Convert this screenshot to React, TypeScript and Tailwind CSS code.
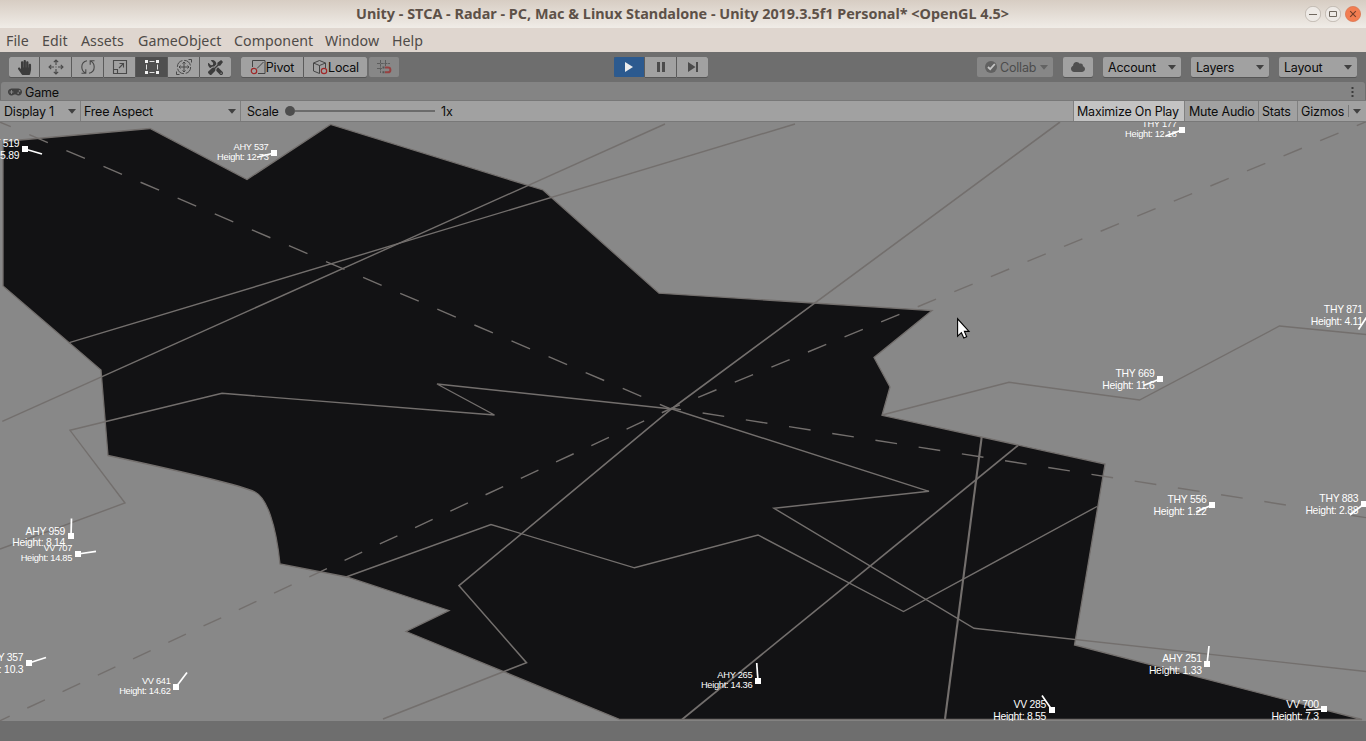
import React from 'react';
import { FaHandPaper, FaTools, FaCloud, FaGamepad } from 'react-icons/fa';

type Plane = {
  name: string;
  height: string;
  right: number;
  base: number;
  x: number;
  y: number;
  tx: number;
  ty: number;
  small?: boolean;
};

const planes: Plane[] = [
  { name: 'THY 519', height: '5.89', right: 19.5, base: 147, x: 25, y: 149, tx: 42, ty: 154 },
  { name: 'AHY 537', height: '12.73', right: 268.7, base: 149.5, x: 274, y: 153, tx: 257, ty: 157.3, small: true },
  { name: 'THY 177', height: '12.18', right: 1176.7, base: 127, x: 1182, y: 130, tx: 1165.5, ty: 136, small: true },
  { name: 'THY 871', height: '4.11', right: 1363, base: 313, x: 1370, y: 312, tx: 1358.5, ty: 329.5 },
  { name: 'THY 669', height: '11.6', right: 1154.7, base: 377.3, x: 1160, y: 379, tx: 1143.5, ty: 385.5 },
  { name: 'THY 556', height: '1.22', right: 1206.7, base: 503, x: 1212, y: 505, tx: 1196, ty: 512 },
  { name: 'THY 883', height: '2.88', right: 1358.5, base: 502, x: 1364, y: 504, tx: 1350, ty: 515 },
  { name: 'AHY 959', height: '8.14', right: 65.3, base: 534.5, x: 71, y: 536, tx: 71.5, ty: 518.5 },
  { name: 'VV 707', height: '14.85', right: 72.3, base: 551, x: 78, y: 554, tx: 96, ty: 551.3, small: true },
  { name: 'THY 357', height: '10.3', right: 23.5, base: 661, x: 29, y: 663, tx: 46, ty: 657.5 },
  { name: 'VV 641', height: '14.62', right: 170.8, base: 684.3, x: 176, y: 687, tx: 187, ty: 672.5, small: true },
  { name: 'AHY 265', height: '14.36', right: 752.5, base: 678, x: 758, y: 681, tx: 756.7, ty: 663, small: true },
  { name: 'VV 285', height: '8.55', right: 1046.3, base: 708.3, x: 1052, y: 710, tx: 1042, ty: 695.5 },
  { name: 'AHY 251', height: '1.33', right: 1202, base: 662.3, x: 1207, y: 664, tx: 1209, ty: 646 },
  { name: 'VV 700', height: '7.3', right: 1319, base: 708, x: 1324, y: 709, tx: 1306, ty: 710 },
];

function Radar() {
  return (
    <svg className="block h-[599px] w-[1366px] bg-[#888888]" viewBox="0 122 1366 599">
      <path
        d="M3 141.5L150 128.5L247 179.5L330.5 124.5L543 190L659 293.2L932 310.5L874 357.5L890 387L882 415.3L1105 464L1074.5 645L1362 719.5H620L406 631.5L449 610.5L347 577L280 564C276 525 267 498 255 492C240 485 180 471 108 455.5L101 370L3 286Z"
        fill="#121214"
        stroke="#736f6d"
        strokeWidth="1.3"
      />
      <g fill="none" stroke="#736f6d" strokeWidth="1.4">
        <path d="M69.3 342.7L795 124" />
        <path d="M2.3 421.3L665 124" />
        <path d="M1060 122L672 408.5L459 585.7L526.5 662.7L383 719" strokeWidth="1.6" />
        <path d="M0 549L125 503L70 430.3L222 393.3L494.5 415L437 384L672 409L929 491.3L774 508.3L974 628.3L1366 671.5" />
        <path d="M346 577L491 524.5L634.5 567.8L758 535L903.5 611.5L1097 506.5" />
        <path d="M682 719.5L1018 445.5" strokeWidth="1.7" />
        <path d="M945 719L981.7 437" strokeWidth="2.1" />
        <path d="M882 415L1009 382.3L1139.5 400L1279.5 326L1366 334.5" />
        <path d="M-7.8 118.8L672 409.5" strokeDasharray="20.17" />
        <path d="M672 408.1L1366 121.8" strokeDasharray="19.79" strokeDashoffset="11.26" />
        <path d="M-7.95 724.4L672 408" strokeDasharray="19.44" />
        <path d="M672 408.2L1366 517.6" strokeDasharray="21.87" strokeDashoffset="12.76" />
      </g>
      {planes.map((p) => (
        <g key={p.name} fill="#ffffff">
          <g
            fontFamily="'Liberation Sans', Arial, sans-serif"
            fontSize={p.small ? 9.3 : 10.4}
            letterSpacing={p.small ? -0.3 : -0.26}
            textAnchor="end"
          >
            <text x={p.right - 0.2} y={p.base}>{p.name}</text>
            <text x={p.right - 0.2} y={p.base + (p.small ? 10 : 11.7)}>{'Height: ' + p.height}</text>
          </g>
          <path d={`M${p.x} ${p.y}L${p.tx} ${p.ty}`} stroke="#ffffff" strokeWidth="1.7" />
          <rect x={p.x - 3} y={p.y - 3} width="6" height="6" />
        </g>
      ))}
      <path
        d="M957.6 318.8V336.2L961.4 332.7L963.8 338L966.7 336.7L964.4 331.4H969Z"
        fill="#ffffff"
        stroke="#000000"
        strokeWidth="1.1"
      />
    </svg>
  );
}

const btn = 'flex h-5 items-center justify-center bg-[#a1a1a1] shadow-[0_1px_0_#565656]';

function Caret({ dim }: { dim?: boolean }) {
  return (
    <svg className="h-[5px] w-2 shrink-0" viewBox="0 0 8 5">
      <path d="M0 0H8L4 4.7Z" fill={dim ? '#636363' : '#414141'} />
    </svg>
  );
}

function Dropdown({ label }: { label: string }) {
  return (
    <div className={btn + ' w-[78px] rounded-[2px] pr-[5px] pl-[5px]'}>
      <span className="flex-1 pt-0.5">{label}</span>
      <Caret />
    </div>
  );
}

function MoveIcon() {
  return (
    <svg className="size-4" viewBox="0 0 16 16" fill="none" stroke="#494949" strokeWidth="1.1">
      <path d="M8 1V6M8 10V15M1 8H6M10 8H15M5.8 3.2L8 1L10.2 3.2M5.8 12.8L8 15L10.2 12.8M3.2 5.8L1 8L3.2 10.2M12.8 5.8L15 8L12.8 10.2" />
      <path d="M7.5 8H8.5" />
    </svg>
  );
}

function RotateIcon() {
  return (
    <svg className="size-4" viewBox="0 0 16 16" fill="none" stroke="#494949" strokeWidth="1.1">
      <path d="M1.5 14.2H5.8V10.2M5.8 14.2C3.2 13 1.8 10.8 1.8 8C1.8 4.8 4 2.4 7 1.8" />
      <path d="M14.5 1.8H10.2V5.8M10.2 1.8C12.8 3 14.2 5.2 14.2 8C14.2 11.2 12 13.6 9 14.2" />
    </svg>
  );
}

function ScaleIcon() {
  return (
    <svg className="size-4" viewBox="0 0 16 16" fill="none" stroke="#494949" strokeWidth="1.1">
      <path d="M1.5 1.5H14.5V14.5H1.5ZM1.5 10.5H5.5V14.5M7 9L11.5 4.5M7.5 4.5H11.5V8.5" />
    </svg>
  );
}

function RectIcon() {
  return (
    <svg className="size-4" viewBox="0 0 16 16">
      <path d="M5.5 2.5H10.5M5.5 13.5H10.5M2.5 5.5V10.5M13.5 5.5V10.5" fill="none" stroke="#e0e0e0" />
      <path d="M1 1H4V4H1ZM12 1H15V4H12ZM1 12H4V15H1ZM12 12H15V15H12Z" fill="#f2f2f2" />
    </svg>
  );
}

function TransformIcon() {
  return (
    <svg className="size-4" viewBox="0 0 16 16" fill="none" stroke="#494949" strokeWidth="1">
      <circle cx="8" cy="8" r="6.6" strokeDasharray="8.5 1.87" />
      <path d="M8 3V13M3 8H13M6.5 4.5L8 3L9.5 4.5M6.5 11.5L8 13L9.5 11.5M4.5 6.5L3 8L4.5 9.5M11.5 6.5L13 8L11.5 9.5" />
      <path d="M12.5 .5H15.5V3.5M.5 12.5V15.5H3.5" />
    </svg>
  );
}

function PivotIcon() {
  return (
    <svg className="size-4 shrink-0" viewBox="0 0 16 16" fill="none">
      <path d="M2.5 8V1.5H15V14.5H8M7 9.5L13.5 3" stroke="#444444" strokeWidth="1" />
      <circle cx="4" cy="12" r="2.7" stroke="#a02828" strokeWidth="1.2" />
    </svg>
  );
}

function LocalIcon() {
  return (
    <svg className="size-4 shrink-0" viewBox="0 0 16 16" fill="none">
      <path d="M7.5 14.5L1.5 12V4L7.5 1.5L13.5 4V9M1.5 4L7.5 6.5L13.5 4M7.5 6.5V14.5" stroke="#444444" strokeWidth="1" />
      <circle cx="12" cy="12" r="2.7" stroke="#a02828" strokeWidth="1.2" />
    </svg>
  );
}

function SnapIcon() {
  return (
    <svg className="size-4" viewBox="0 0 16 16" fill="none">
      <path d="M1 4.5H14M4.5 1V14M9.5 1V7M1 9.5H6" stroke="#5d5d5d" strokeWidth="1" strokeDasharray="3 .7" />
      <path d="M9 8.5H12A2.4 2.4 0 0 1 12 13.3H9" stroke="#974242" strokeWidth="2" />
      <path d="M6.5 8.5H8.5M6.5 13.3H8.5" stroke="#555555" strokeWidth="2" />
    </svg>
  );
}

function WindowButtons() {
  return (
    <div className="flex gap-1">
      <svg className="size-4" viewBox="0 0 16 16">
        <circle cx="8" cy="8" r="7.7" fill="#eeeae6" stroke="#b5aca4" strokeWidth=".7" />
        <path d="M4 8.5H12" stroke="#70685f" />
      </svg>
      <svg className="size-4" viewBox="0 0 16 16">
        <circle cx="8" cy="8" r="7.7" fill="#eeeae6" stroke="#b5aca4" strokeWidth=".7" />
        <path d="M4.5 5.5H11.5V10.5H4.5Z" fill="none" stroke="#70685f" />
      </svg>
      <svg className="size-4" viewBox="0 0 16 16">
        <circle cx="8" cy="8" r="7.6" fill="#f27d51" stroke="#d9714c" strokeWidth=".7" />
        <path d="M5.2 5.2L10.8 10.8M10.8 5.2L5.2 10.8" stroke="#713d29" strokeWidth="1.1" />
      </svg>
    </div>
  );
}

export default function App() {
  return (
    <div className="flex h-[741px] w-[1366px] flex-col overflow-hidden bg-[#6e6e6e] font-['Inter',sans-serif] text-[12.5px] leading-none tracking-[-0.2px] whitespace-nowrap text-[#0c0c0c]">
      <div className="flex h-7 shrink-0 items-center bg-linear-to-b from-[#d7cdc3] to-[#f0ece7] pr-[5px] font-['Noto_Sans',sans-serif] text-[14.4px] font-bold tracking-[0.01px] text-[#5d5148]">
        <div className="w-[356px]" />
        <div className="flex-1">Unity - STCA - Radar - PC, Mac &amp; Linux Standalone - Unity 2019.3.5f1 Personal* &lt;OpenGL 4.5&gt;</div>
        <WindowButtons />
      </div>

      <div className="flex h-6 shrink-0 items-center bg-[#dfd6cf] pt-0.5 pl-1.5 font-['Noto_Sans',sans-serif] text-[14.2px] tracking-[0.05px] text-[#4f4b48]">
        <span className="w-9">File</span>
        <span className="w-[39px]">Edit</span>
        <span className="w-[57px]">Assets</span>
        <span className="w-24">GameObject</span>
        <span className="w-[91px]">Component</span>
        <span className="w-[67px]">Window</span>
        <span>Help</span>
      </div>

      <div className="flex h-[30px] shrink-0 items-start bg-[#6e6e6e] pt-[5px] pr-[9px] pl-[9px]">
        <div className="flex gap-px bg-[#5b5b5b]">
          <div className={btn + ' w-[30px] rounded-l-[2px]'}><FaHandPaper className="size-[15px] text-[#3c3c3c]" /></div>
          <div className={btn + ' w-[31px]'}><MoveIcon /></div>
          <div className={btn + ' w-[31px]'}><RotateIcon /></div>
          <div className={btn + ' w-[31px]'}><ScaleIcon /></div>
          <div className="flex h-5 w-[31px] items-center justify-center bg-[#4f4f4f]"><RectIcon /></div>
          <div className={btn + ' w-[31px]'}><TransformIcon /></div>
          <div className={btn + ' w-[31px] rounded-r-[2px]'}><FaTools className="size-[15px] -scale-x-100 text-[#3c3c3c]" /></div>
        </div>
        <div className="ml-[10px] flex gap-px bg-[#5b5b5b]">
          <div className={btn + ' w-[62px] rounded-l-[2px]'}><PivotIcon /><span className="pt-0.5">Pivot</span></div>
          <div className={btn + ' w-[63px] rounded-r-[2px]'}><LocalIcon /><span className="pt-0.5">Local</span></div>
        </div>
        <div className="ml-0.5 flex h-5 w-[30px] items-center justify-center rounded-[2px] bg-[#878787]"><SnapIcon /></div>
        <div className="ml-[215px] flex gap-px bg-[#5b5b5b]">
          <div className="flex h-5 w-[30px] items-center justify-center rounded-l-[2px] bg-[#2c5a8f]">
            <svg className="h-[10px] w-2" viewBox="0 0 8 10"><path d="M0 0L8 5L0 10Z" fill="#ececec" /></svg>
          </div>
          <div className={btn + ' w-[31px]'}>
            <svg className="h-[10px] w-2" viewBox="0 0 8 10"><path d="M0 0H3V10H0ZM5 0H8V10H5Z" fill="#4b4b4b" /></svg>
          </div>
          <div className={btn + ' w-[31px] rounded-r-[2px]'}>
            <svg className="h-[10px] w-[10px]" viewBox="0 0 10 10"><path d="M0 0L7.5 5L0 10ZM8 0H10V10H8Z" fill="#4b4b4b" /></svg>
          </div>
        </div>
        <div className="flex-1" />
        <div className="flex gap-[10px]">
          <div className="flex h-5 w-[76px] items-center rounded-[2px] bg-[#878787] pr-[5px] pl-2 text-[#4c4c4c]">
            <svg className="size-3 shrink-0" viewBox="0 0 12 12">
              <circle cx="6" cy="6" r="6" fill="#616161" />
              <path d="M3 6L5.2 8.2L9.8 3" fill="none" stroke="#c4c4c4" strokeWidth="1.8" />
            </svg>
            <span className="ml-[3px] flex-1 pt-0.5">Collab</span>
            <Caret dim />
          </div>
          <div className={btn + ' w-[30px] rounded-[2px]'}><FaCloud className="size-[14px] text-[#4f4f4f]" /></div>
          <Dropdown label="Account" />
          <Dropdown label="Layers" />
          <Dropdown label="Layout" />
        </div>
      </div>

      <div className="mx-px flex h-[18px] shrink-0 items-center rounded-t-[3px] bg-[#848484] pt-0.5 pr-[11px] pl-[7px]">
        <FaGamepad className="size-[14px] text-[#414141]" />
        <span className="ml-[3px] flex-1 pt-0.5">Game</span>
        <svg className="h-[10px] w-[3px]" viewBox="0 0 3 10"><path d="M.5 0H2.5V2H.5ZM.5 4H2.5V6H.5ZM.5 8H2.5V10H.5Z" fill="#3c3c3c" /></svg>
      </div>

      <div className="flex h-[22px] shrink-0 items-stretch border-y border-[#787878] bg-[#a1a1a1]">
        <div className="flex w-[81px] items-center border-r border-[#808080] pr-1 pl-1"><span className="flex-1 pt-0.5">Display 1</span><Caret /></div>
        <div className="flex w-40 items-center border-r border-[#808080] pr-1 pl-[3px]"><span className="flex-1 pt-0.5">Free Aspect</span><Caret /></div>
        <div className="flex flex-1 items-center pl-1.5">
          <span className="w-[38px] pt-0.5">Scale</span>
          <span className="size-[10px] rounded-full bg-[#4d4d4d]" />
          <span className="h-0.5 w-[140px] bg-[#6b6b6b]" />
          <span className="ml-[6px] pt-0.5">1x</span>
        </div>
        <div className="flex w-[112px] items-center border-x border-[#808080] bg-[#c3c3c3] pt-0.5 pl-[3px]">Maximize On Play</div>
        <div className="flex w-[74px] items-center border-r border-[#808080] pt-0.5 pl-1">Mute Audio</div>
        <div className="flex w-[39px] items-center border-r border-[#808080] pt-0.5 pl-[3px]">Stats</div>
        <div className="flex w-[68px] items-center pr-[5px] pl-[3px]">
          <span className="flex-1 pt-0.5">Gizmos</span>
          <span className="mr-1 h-3 w-px bg-[#7a7a7a]" />
          <Caret />
        </div>
      </div>

      <Radar />
    </div>
  );
}
